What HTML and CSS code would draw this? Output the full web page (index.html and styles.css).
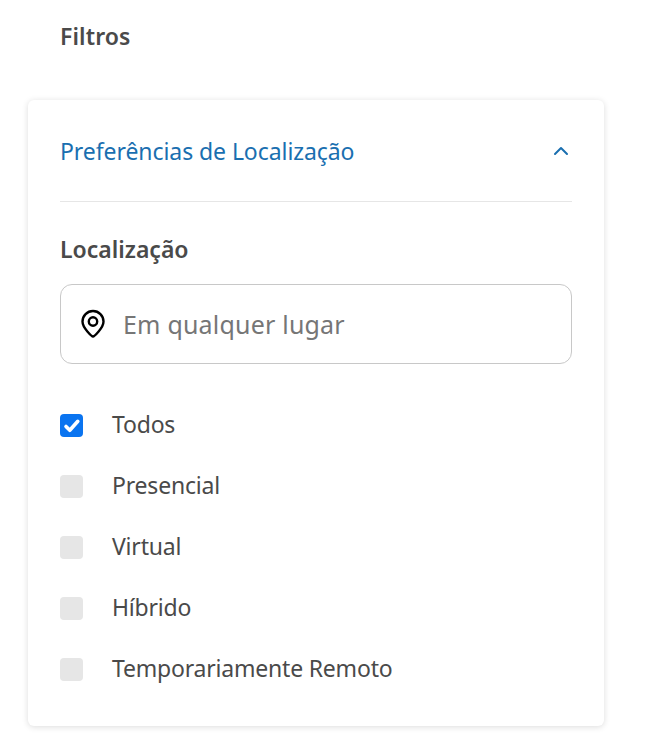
FILE: index.html
```html
<!DOCTYPE html>
<html lang="pt">
<head>
  <meta charset="UTF-8">
  <title>Filtros</title>
  <link rel="stylesheet" href="styles.css">
</head>
<body>
  <h1 class="page-title">Filtros</h1>
  <section class="card">
    <div class="card-header">
      <h2>Preferências de Localização</h2>
      <svg class="chevron" width="16" height="10" viewBox="0 0 16 10" fill="none" stroke="#1a6fb0" stroke-width="2" stroke-linecap="round" stroke-linejoin="round"><path d="M2 8l6-6 6 6"/></svg>
    </div>
    <h3>Localização</h3>
    <div class="location-input">
      <svg width="26" height="30" viewBox="0 0 26 30" fill="none" stroke="#000" stroke-width="2.400" stroke-linejoin="round"><path d="M13 27.500c-1 0-10.500-8.500-10.500-15a10.500 10.500 0 0 1 21 0c0 6.500-9.500 15-10.500 15z"/><circle cx="13" cy="12.500" r="4.200"/></svg>
      <span class="placeholder">Em qualquer lugar</span>
    </div>
    <ul class="options">
      <li><span class="checkbox checked"><svg width="18" height="16" viewBox="0 0 18 16" fill="none" stroke="#fff" stroke-width="3.600" stroke-linecap="round" stroke-linejoin="round"><path d="M3 8.500l3.800 3.800 8-9"/></svg></span><span class="label">Todos</span></li>
      <li><span class="checkbox"></span><span class="label">Presencial</span></li>
      <li><span class="checkbox"></span><span class="label">Virtual</span></li>
      <li><span class="checkbox"></span><span class="label">Híbrido</span></li>
      <li><span class="checkbox"></span><span class="label">Temporariamente Remoto</span></li>
    </ul>
  </section>
</body>
</html>
```
FILE: styles.css
```css
html, body {
  margin: 0;
  background: #fff;
}
body {
  font-family: "Noto Sans", "Open Sans", sans-serif;
  color: #4a4a4a;
  padding: 0 60px 0 28px;
  height: 742px;
  box-sizing: border-box;
  overflow: hidden;
}
.page-title {
  margin: 0 0 46px 32px;
  padding-top: 19px;
  font-size: 23px;
  line-height: 35px;
  font-weight: 600;
  letter-spacing: 0.1px;
}
.card {
  height: 626px;
  box-sizing: border-box;
  padding: 0 32px;
  border-radius: 6px;
  background: #fff;
  box-shadow: 0 1px 6px rgba(0, 0, 0, 0.14);
}
.card-header {
  display: flex;
  align-items: center;
  justify-content: space-between;
  height: 101px;
  border-bottom: 1px solid #e6e6e6;
  padding-right: 3px;
}
.card-header h2 {
  margin: 0;
  font-size: 23px;
  font-weight: 400;
  letter-spacing: -0.07px;
  color: #1a6fb0;
}
h3 {
  margin: 30px 0 17px;
  font-size: 23px;
  line-height: 35px;
  font-weight: 600;
}
.location-input {
  display: flex;
  align-items: center;
  gap: 17px;
  height: 78px;
  padding-left: 19px;
  border: 1px solid #c8c8c8;
  border-radius: 12px;
}
.placeholder {
  font-size: 25px;
  letter-spacing: 0.2px;
  color: #767676;
}
.options {
  list-style: none;
  margin: 31px 0 0;
  padding: 0;
}
.options li {
  display: flex;
  align-items: center;
  gap: 29px;
  height: 61px;
  font-size: 23px;
  letter-spacing: -0.2px;
}
.label {
  margin-bottom: 4px;
}
.checkbox {
  display: flex;
  align-items: center;
  justify-content: center;
  width: 23px;
  height: 23px;
  border-radius: 4px;
  background: #e6e6e6;
}
.checkbox.checked {
  background: #0a74f0;
}
```
